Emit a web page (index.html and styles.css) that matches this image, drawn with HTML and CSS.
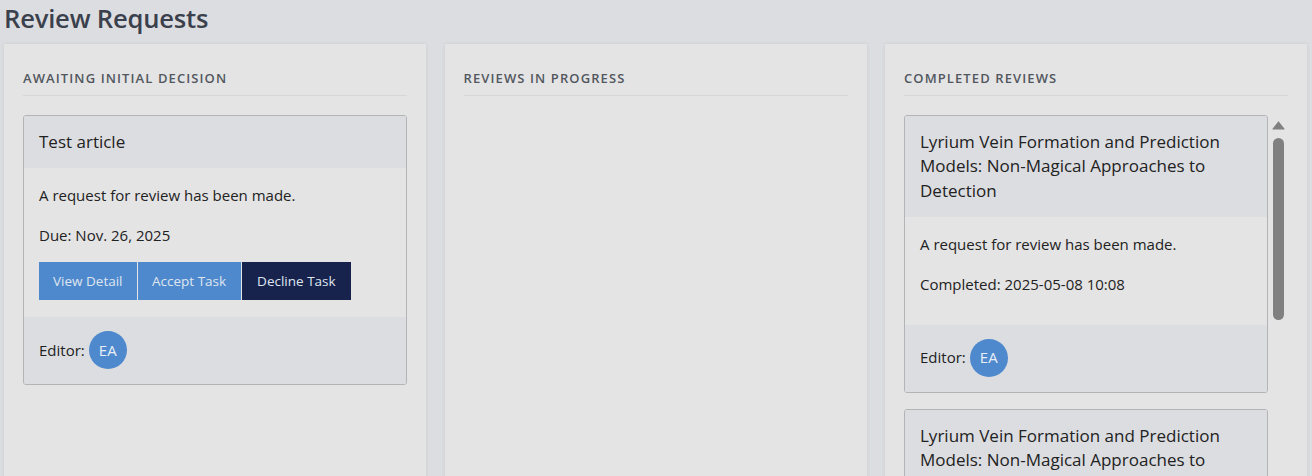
FILE: index.html
```html
<!DOCTYPE html>
<html lang="en">
<head>
<meta charset="utf-8">
<title>Review Requests</title>
<link rel="stylesheet" href="styles.css">
</head>
<body>
<div class="page">
  <h1 class="page-title">Review Requests</h1>
  <div class="board">
    <section class="panel">
      <h2 class="panel-title">Awaiting Initial Decision</h2>
      <div class="panel-list">
        <article class="card">
          <div class="card-head">Test article</div>
          <div class="card-body">
            <p>A request for review has been made.</p>
            <p class="last">Due: Nov. 26, 2025</p>
            <div class="actions">
              <button class="btn btn-blue">View Detail</button>
              <button class="btn btn-blue btn-wide">Accept Task</button>
              <button class="btn btn-dark">Decline Task</button>
            </div>
          </div>
          <div class="card-foot">Editor: <span class="avatar">EA</span></div>
        </article>
      </div>
    </section>
    <section class="panel">
      <h2 class="panel-title">Reviews in Progress</h2>
      <div class="panel-list"></div>
    </section>
    <section class="panel">
      <h2 class="panel-title">Completed Reviews</h2>
      <div class="scroll-wrap">
        <div class="panel-list scroll">
          <article class="card">
            <div class="card-head">Lyrium Vein Formation and Prediction Models: Non-Magical Approaches to Detection</div>
            <div class="card-body">
              <p>A request for review has been made.</p>
              <p class="done">Completed: 2025-05-08 10:08</p>
            </div>
            <div class="card-foot">Editor: <span class="avatar">EA</span></div>
          </article>
          <article class="card">
            <div class="card-head">Lyrium Vein Formation and Prediction Models: Non-Magical Approaches to Detection</div>
            <div class="card-body">
              <p>A request for review has been made.</p>
              <p class="done">Completed: 2025-05-08 10:08</p>
            </div>
            <div class="card-foot">Editor: <span class="avatar">EA</span></div>
          </article>
          <article class="card">
            <div class="card-head">Lyrium Vein Formation and Prediction Models: Non-Magical Approaches to Detection</div>
            <div class="card-body">
              <p>A request for review has been made.</p>
              <p class="done">Completed: 2025-05-08 10:08</p>
            </div>
            <div class="card-foot">Editor: <span class="avatar">EA</span></div>
          </article>
        </div>
        <div class="rail" aria-hidden="true">
          <svg class="rail-arrow" width="13" height="9" viewBox="0 0 13 9"><path d="M6.5 1 L12 8 L1 8 Z" fill="#808080" stroke="#808080" stroke-width="1.2" stroke-linejoin="round"/></svg>
          <div class="rail-thumb"></div>
        </div>
      </div>
    </section>
  </div>
</div>
</body>
</html>
```
FILE: styles.css
```css
html, body {
  margin: 0;
  padding: 0;
  height: 100%;
  overflow: hidden;
}
body {
  background: #dcdde1;
  font-family: "Open Sans", "Liberation Sans", sans-serif;
  color: #222;
}
.page {
  padding: 0 4px;
}
.page-title {
  margin: 0;
  padding-top: 2px;
  height: 42px;
  font-size: 25.6px;
  line-height: 34px;
  font-weight: 600;
  color: #3a404c;
  letter-spacing: -0.2px;
}
.board {
  display: grid;
  grid-template-columns: 422px 422px 422px;
  column-gap: 18.5px;
}
.panel {
  background: #e4e4e4;
  box-shadow: 0 0 4px rgba(0, 0, 0, 0.07);
  padding: 25px 19px 0;
  height: 520px;
  box-sizing: border-box;
  display: flex;
  flex-direction: column;
}
.panel-title {
  margin: 0;
  font-size: 13px;
  line-height: 18px;
  font-weight: 600;
  letter-spacing: 1.1px;
  text-transform: uppercase;
  color: #52575e;
  padding-bottom: 8px;
  border-bottom: 1px solid #d7d7d9;
}
.panel-list {
  margin-top: 19px;
  display: flex;
  flex-direction: column;
  gap: 16px;
}
.scroll-wrap {
  margin-top: 19px;
  display: flex;
  height: 440px;
  overflow: hidden;
}
.panel-list.scroll {
  margin-top: 0;
  flex: 1;
  min-width: 0;
}
.rail {
  width: 15px;
  margin: 0 2px 0 3px;
  display: flex;
  flex-direction: column;
  align-items: center;
}
.rail-arrow {
  display: block;
  margin-top: 6px;
}
.rail-thumb {
  margin-top: 8px;
  width: 11px;
  height: 182px;
  border-radius: 6px;
  background: #808080;
}
.card {
  flex: none;
  border: 1px solid #b4b4b6;
  border-radius: 3px;
  overflow: hidden;
  background: #e4e4e4;
}
.card-head {
  background: #dcdde1;
  padding: 14px 15px 14px;
  font-size: 17px;
  line-height: 1.42857;
  color: #222;
}
.card-body {
  padding: 17px 15px 17px;
  font-size: 15px;
  line-height: 21px;
}
.card-body p {
  margin: 0 0 19px;
}
.card-body p.last {
  margin-bottom: 16px;
}
.card-body p.done {
  margin-bottom: 13px;
}
.actions {
  display: flex;
  gap: 1px;
}
.btn {
  border: 0;
  margin: 0;
  height: 38px;
  padding: 0 14px;
  font-family: "Open Sans", "Liberation Sans", sans-serif;
  font-size: 13.5px;
  color: #dfe5ef;
  cursor: pointer;
}
.btn-blue {
  background: #4f89cd;
}
.btn-wide {
  padding: 0 14.5px;
}
.btn-dark {
  background: #17234d;
  padding: 0 15.5px;
}
.card-foot {
  background: #dcdde1;
  padding: 14px 15px 15px;
  display: flex;
  align-items: center;
  gap: 4px;
  font-size: 15px;
  line-height: 21px;
}
.avatar {
  width: 38px;
  height: 38px;
  border-radius: 50%;
  background: #4f89cd;
  color: #e8eef8;
  display: flex;
  align-items: center;
  justify-content: center;
  font-size: 15px;
}
```
